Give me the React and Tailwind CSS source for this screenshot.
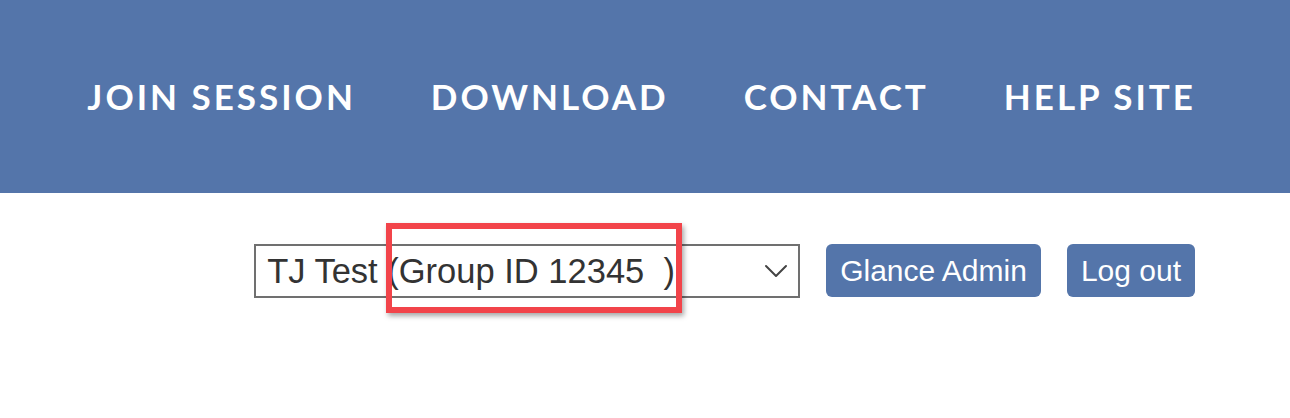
import React from 'react'

const navItems = ['Join Session', 'Download', 'Contact', 'Help Site']

function Chevron() {
  return (
    <svg width="24" height="14" viewBox="0 0 24 14" fill="none" className="shrink-0">
      <path d="M2 2 L12 12 L22 2" stroke="#444" strokeWidth="2" strokeLinecap="round" strokeLinejoin="round" />
    </svg>
  )
}

export default function App() {
  return (
    <div className="w-[1290px] h-[418px] bg-white overflow-hidden">
      {/* Top nav */}
      <header className="h-[193px] bg-[#5475aa] flex items-center justify-end pr-[94px]">
        <nav className="flex items-center gap-[75px]">
          {navItems.map((item) => (
            <a
              key={item}
              href="#"
              className="text-white uppercase font-bold text-[35px] tracking-[3px] leading-none font-['Lato',sans-serif]"
            >
              {item}
            </a>
          ))}
        </nav>
      </header>

      {/* Account row */}
      <div className="flex items-start justify-end pr-[95px] pt-[51px] gap-[26px] font-['Liberation_Sans',Arial,sans-serif]">
        <div className="relative">
          <div className="w-[546px] h-[54px] border-2 border-[#707070] flex items-center justify-between pl-[11px] pr-[10px]">
            <span className="text-[34.5px] leading-none text-[#333] whitespace-pre">TJ Test (Group ID 12345  )</span>
            <Chevron />
          </div>
          {/* highlight */}
          <div className="absolute left-[132px] top-[-21px] w-[296px] h-[90px] border-[6px] border-[#f2444a] shadow-[2px_3px_5px_rgba(0,0,0,0.35)] pointer-events-none" />
        </div>
        <button className="h-[53px] px-[14px] rounded-[6px] bg-[#5475aa] text-white text-[30px] leading-none">
          Glance Admin
        </button>
        <button className="h-[53px] px-[14px] rounded-[6px] bg-[#5475aa] text-white text-[30px] leading-none">
          Log out
        </button>
      </div>
    </div>
  )
}
